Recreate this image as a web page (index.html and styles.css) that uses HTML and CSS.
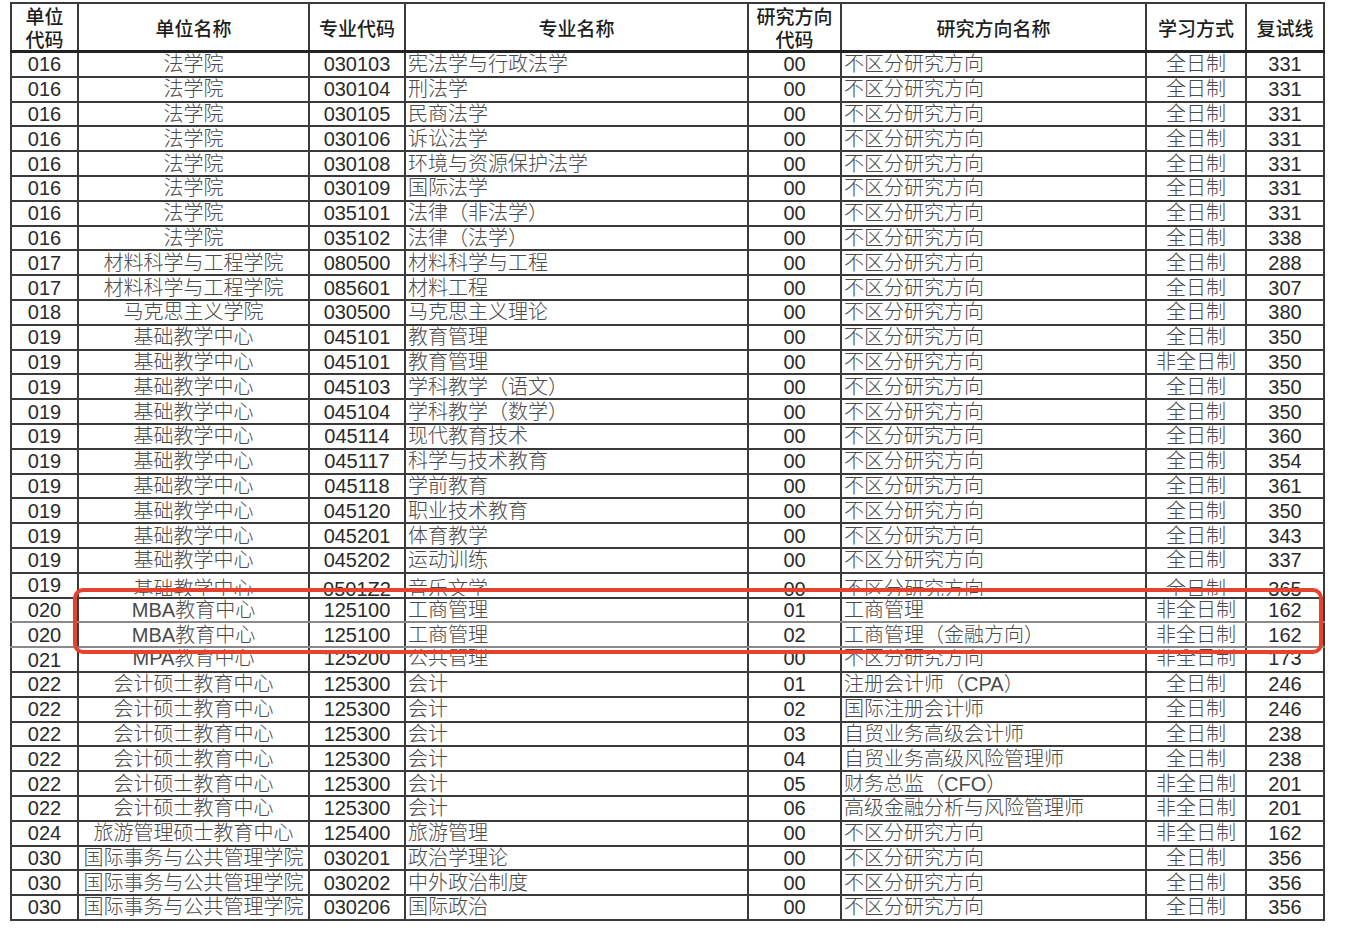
FILE: index.html
```html
<!DOCTYPE html>
<html lang="zh-CN">
<head>
<meta charset="utf-8">
<title>复试线</title>
<link rel="stylesheet" href="styles.css">
</head>
<body>
<div class="sheet">
<table class="grid">
<colgroup>
<col class="c1"><col class="c2"><col class="c3"><col class="c4"><col class="c5"><col class="c6"><col class="c7"><col class="c8">
</colgroup>
<thead>
<tr>
<th>单位<br>代码</th><th>单位名称</th><th>专业代码</th><th>专业名称</th><th>研究方向<br>代码</th><th>研究方向名称</th><th>学习方式</th><th>复试线</th>
</tr>
</thead>
<tbody>
<tr><td>016</td><td class="zh">法学院</td><td>030103</td><td class="l zh">宪法学与行政法学</td><td>00</td><td class="l zh">不区分研究方向</td><td class="zh">全日制</td><td>331</td></tr>
<tr><td>016</td><td class="zh">法学院</td><td>030104</td><td class="l zh">刑法学</td><td>00</td><td class="l zh">不区分研究方向</td><td class="zh">全日制</td><td>331</td></tr>
<tr><td>016</td><td class="zh">法学院</td><td>030105</td><td class="l zh">民商法学</td><td>00</td><td class="l zh">不区分研究方向</td><td class="zh">全日制</td><td>331</td></tr>
<tr><td>016</td><td class="zh">法学院</td><td>030106</td><td class="l zh">诉讼法学</td><td>00</td><td class="l zh">不区分研究方向</td><td class="zh">全日制</td><td>331</td></tr>
<tr><td>016</td><td class="zh">法学院</td><td>030108</td><td class="l zh">环境与资源保护法学</td><td>00</td><td class="l zh">不区分研究方向</td><td class="zh">全日制</td><td>331</td></tr>
<tr><td>016</td><td class="zh">法学院</td><td>030109</td><td class="l zh">国际法学</td><td>00</td><td class="l zh">不区分研究方向</td><td class="zh">全日制</td><td>331</td></tr>
<tr><td>016</td><td class="zh">法学院</td><td>035101</td><td class="l zh">法律（非法学）</td><td>00</td><td class="l zh">不区分研究方向</td><td class="zh">全日制</td><td>331</td></tr>
<tr><td>016</td><td class="zh">法学院</td><td>035102</td><td class="l zh">法律（法学）</td><td>00</td><td class="l zh">不区分研究方向</td><td class="zh">全日制</td><td>338</td></tr>
<tr><td>017</td><td class="zh">材料科学与工程学院</td><td>080500</td><td class="l zh">材料科学与工程</td><td>00</td><td class="l zh">不区分研究方向</td><td class="zh">全日制</td><td>288</td></tr>
<tr><td>017</td><td class="zh">材料科学与工程学院</td><td>085601</td><td class="l zh">材料工程</td><td>00</td><td class="l zh">不区分研究方向</td><td class="zh">全日制</td><td>307</td></tr>
<tr><td>018</td><td class="zh">马克思主义学院</td><td>030500</td><td class="l zh">马克思主义理论</td><td>00</td><td class="l zh">不区分研究方向</td><td class="zh">全日制</td><td>380</td></tr>
<tr><td>019</td><td class="zh">基础教学中心</td><td>045101</td><td class="l zh">教育管理</td><td>00</td><td class="l zh">不区分研究方向</td><td class="zh">全日制</td><td>350</td></tr>
<tr><td>019</td><td class="zh">基础教学中心</td><td>045101</td><td class="l zh">教育管理</td><td>00</td><td class="l zh">不区分研究方向</td><td class="zh">非全日制</td><td>350</td></tr>
<tr><td>019</td><td class="zh">基础教学中心</td><td>045103</td><td class="l zh">学科教学（语文）</td><td>00</td><td class="l zh">不区分研究方向</td><td class="zh">全日制</td><td>350</td></tr>
<tr><td>019</td><td class="zh">基础教学中心</td><td>045104</td><td class="l zh">学科教学（数学）</td><td>00</td><td class="l zh">不区分研究方向</td><td class="zh">全日制</td><td>350</td></tr>
<tr><td>019</td><td class="zh">基础教学中心</td><td>045114</td><td class="l zh">现代教育技术</td><td>00</td><td class="l zh">不区分研究方向</td><td class="zh">全日制</td><td>360</td></tr>
<tr><td>019</td><td class="zh">基础教学中心</td><td>045117</td><td class="l zh">科学与技术教育</td><td>00</td><td class="l zh">不区分研究方向</td><td class="zh">全日制</td><td>354</td></tr>
<tr><td>019</td><td class="zh">基础教学中心</td><td>045118</td><td class="l zh">学前教育</td><td>00</td><td class="l zh">不区分研究方向</td><td class="zh">全日制</td><td>361</td></tr>
<tr><td>019</td><td class="zh">基础教学中心</td><td>045120</td><td class="l zh">职业技术教育</td><td>00</td><td class="l zh">不区分研究方向</td><td class="zh">全日制</td><td>350</td></tr>
<tr><td>019</td><td class="zh">基础教学中心</td><td>045201</td><td class="l zh">体育教学</td><td>00</td><td class="l zh">不区分研究方向</td><td class="zh">全日制</td><td>343</td></tr>
<tr><td>019</td><td class="zh">基础教学中心</td><td>045202</td><td class="l zh">运动训练</td><td>00</td><td class="l zh">不区分研究方向</td><td class="zh">全日制</td><td>337</td></tr>
<tr><td>019</td><td class="zh"><div class="cutb">基础教学中心</div></td><td><div class="cutb">0501Z2</div></td><td class="l zh"><div class="cutb">音乐文学</div></td><td><div class="cutb">00</div></td><td class="l zh"><div class="cutb">不区分研究方向</div></td><td class="zh"><div class="cutb">全日制</div></td><td><div class="cutb">365</div></td></tr>
<tr class="soft"><td>020</td><td class="zh">MBA教育中心</td><td>125100</td><td class="l zh">工商管理</td><td>01</td><td class="l zh">工商管理</td><td class="zh">非全日制</td><td>162</td></tr>
<tr class="soft"><td>020</td><td class="zh">MBA教育中心</td><td>125100</td><td class="l zh">工商管理</td><td>02</td><td class="l zh">工商管理（金融方向）</td><td class="zh">非全日制</td><td>162</td></tr>
<tr><td>021</td><td class="zh"><div class="cutt"><span>MPA教育中心</span></div></td><td><div class="cutt"><span>125200</span></div></td><td class="l zh"><div class="cutt"><span>公共管理</span></div></td><td><div class="cutt"><span>00</span></div></td><td class="l zh"><div class="cutt"><span>不区分研究方向</span></div></td><td class="zh"><div class="cutt"><span>非全日制</span></div></td><td><div class="cutt"><span>173</span></div></td></tr>
<tr><td>022</td><td class="zh">会计硕士教育中心</td><td>125300</td><td class="l zh">会计</td><td>01</td><td class="l zh">注册会计师（CPA）</td><td class="zh">全日制</td><td>246</td></tr>
<tr><td>022</td><td class="zh">会计硕士教育中心</td><td>125300</td><td class="l zh">会计</td><td>02</td><td class="l zh">国际注册会计师</td><td class="zh">全日制</td><td>246</td></tr>
<tr><td>022</td><td class="zh">会计硕士教育中心</td><td>125300</td><td class="l zh">会计</td><td>03</td><td class="l zh">自贸业务高级会计师</td><td class="zh">全日制</td><td>238</td></tr>
<tr><td>022</td><td class="zh">会计硕士教育中心</td><td>125300</td><td class="l zh">会计</td><td>04</td><td class="l zh">自贸业务高级风险管理师</td><td class="zh">全日制</td><td>238</td></tr>
<tr><td>022</td><td class="zh">会计硕士教育中心</td><td>125300</td><td class="l zh">会计</td><td>05</td><td class="l zh">财务总监（CFO）</td><td class="zh">非全日制</td><td>201</td></tr>
<tr><td>022</td><td class="zh">会计硕士教育中心</td><td>125300</td><td class="l zh">会计</td><td>06</td><td class="l zh">高级金融分析与风险管理师</td><td class="zh">非全日制</td><td>201</td></tr>
<tr><td>024</td><td class="zh">旅游管理硕士教育中心</td><td>125400</td><td class="l zh">旅游管理</td><td>00</td><td class="l zh">不区分研究方向</td><td class="zh">非全日制</td><td>162</td></tr>
<tr><td>030</td><td class="zh">国际事务与公共管理学院</td><td>030201</td><td class="l zh">政治学理论</td><td>00</td><td class="l zh">不区分研究方向</td><td class="zh">全日制</td><td>356</td></tr>
<tr><td>030</td><td class="zh">国际事务与公共管理学院</td><td>030202</td><td class="l zh">中外政治制度</td><td>00</td><td class="l zh">不区分研究方向</td><td class="zh">全日制</td><td>356</td></tr>
<tr><td>030</td><td class="zh">国际事务与公共管理学院</td><td>030206</td><td class="l zh">国际政治</td><td>00</td><td class="l zh">不区分研究方向</td><td class="zh">全日制</td><td>356</td></tr>
</tbody>
</table>
<div class="highlight"></div>
</div>
</body>
</html>
```

FILE: styles.css
```css
html, body {
  margin: 0;
  padding: 0;
  background: #ffffff;
}

.sheet {
  position: relative;
  width: 1350px;
  height: 932px;
  padding: 2px 0 0 10px;
  box-sizing: border-box;
}

.grid {
  border-collapse: collapse;
  table-layout: fixed;
  width: 1313px;
  font-family: "Liberation Sans", "Noto Sans CJK SC", sans-serif;
  font-size: 20px;
  color: #2a2a2a;
}

.c1 { width: 67px; }
.c2 { width: 231px; }
.c3 { width: 96px; }
.c4 { width: 343px; }
.c5 { width: 93px; }
.c6 { width: 305px; }
.c7 { width: 100px; }
.c8 { width: 78px; }

.grid th,
.grid td {
  border: 2px solid #3a3a3a;
  padding: 0;
  text-align: center;
  vertical-align: middle;
  white-space: nowrap;
  overflow: hidden;
}

.grid th {
  height: 46px;
  font-family: "Noto Sans CJK SC", sans-serif;
  font-weight: 500;
  font-size: 19px;
  line-height: 23px;
  color: #1e1e1e;
  border-bottom: 3px solid #222;
}

.grid td {
  height: 22.8px;
  line-height: 22px;
}

.grid td.zh {
  color: #4a4a4a;
  font-weight: 300;
}

.grid td.l {
  text-align: left;
  padding-left: 2px;
}

.grid tr.soft td {
  border-top-color: #8a8a8a;
  border-bottom-color: #8a8a8a;
}

.cutb {
  height: 22px;
  box-sizing: border-box;
  padding-top: 4px;
  line-height: 22px;
  overflow: hidden;
}

.cutt {
  height: 22px;
  overflow: hidden;
}

.cutt span {
  display: block;
  margin-top: -2px;
  line-height: 22px;
}

.highlight {
  position: absolute;
  left: 73px;
  top: 588px;
  width: 1250px;
  height: 66px;
  box-sizing: border-box;
  border: 4px solid #e5432d;
  border-radius: 10px;
  pointer-events: none;
}
```
